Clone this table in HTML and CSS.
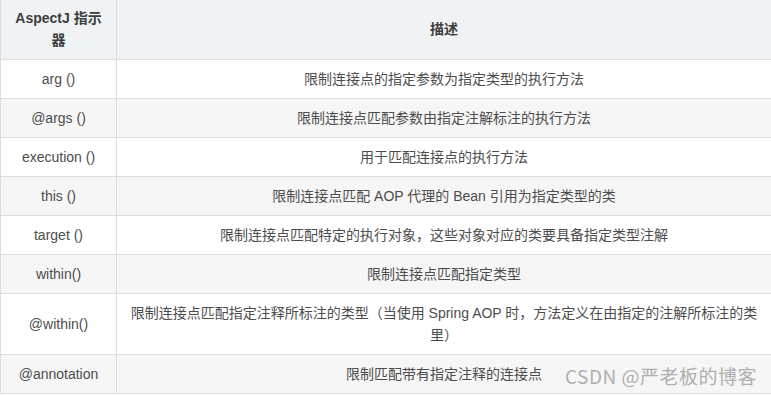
FILE: index.html
```html
<!DOCTYPE html>
<html lang="zh-CN">
<head>
<meta charset="utf-8">
<title>AspectJ 指示器</title>
<link rel="stylesheet" href="styles.css">
</head>
<body>
<div class="page">
  <table class="pc-table">
    <colgroup>
      <col class="col-name">
      <col class="col-desc">
    </colgroup>
    <thead>
      <tr><th>AspectJ 指示器</th><th>描述</th></tr>
    </thead>
    <tbody>
      <tr><td>arg ()</td><td>限制连接点的指定参数为指定类型的执行方法</td></tr>
      <tr><td>@args ()</td><td>限制连接点匹配参数由指定注解标注的执行方法</td></tr>
      <tr><td>execution ()</td><td>用于匹配连接点的执行方法</td></tr>
      <tr><td>this ()</td><td>限制连接点匹配 AOP 代理的 Bean 引用为指定类型的类</td></tr>
      <tr><td>target ()</td><td>限制连接点匹配特定的执行对象，这些对象对应的类要具备指定类型注解</td></tr>
      <tr><td>within()</td><td>限制连接点匹配指定类型</td></tr>
      <tr><td>@within()</td><td>限制连接点匹配指定注释所标注的类型（当使用 Spring AOP 时，方法定义在由指定的注解所标注的类里）</td></tr>
      <tr><td>@annotation</td><td>限制匹配带有指定注释的连接点</td></tr>
    </tbody>
  </table>
  <div class="watermark">CSDN @严老板的博客</div>
</div>
</body>
</html>
```

FILE: styles.css
```css
html, body {
  margin: 0;
  padding: 0;
  background: #ffffff;
}
.page {
  position: relative;
  width: 771px;
  height: 395px;
  overflow: hidden;
}
.pc-table {
  width: 772px;
  table-layout: fixed;
  border-collapse: collapse;
  font-family: "Liberation Sans", "Noto Sans CJK SC", sans-serif;
  font-size: 14px;
  line-height: 22px;
  color: #4d4d4d;
}
.col-name { width: 116px; }
.pc-table th,
.pc-table td {
  border: 1px solid #dddddd;
  padding: 8px 8px;
  text-align: center;
  vertical-align: middle;
  word-break: break-all;
}
.pc-table th {
  background: #eff3f5;
  font-weight: bold;
  color: #3d3d3d;
  border-top: none;
  padding: 7px 8px 8px;
}
.pc-table tbody tr:nth-child(even) td {
  background: #f6f6f6;
}
.watermark {
  position: absolute;
  left: 565px;
  top: 363px;
  font-family: "Noto Sans CJK SC", "Liberation Sans", sans-serif;
  font-size: 19px;
  line-height: 26px;
  color: #b0b0b0;
  white-space: nowrap;
  letter-spacing: 0.5px;
}
```
